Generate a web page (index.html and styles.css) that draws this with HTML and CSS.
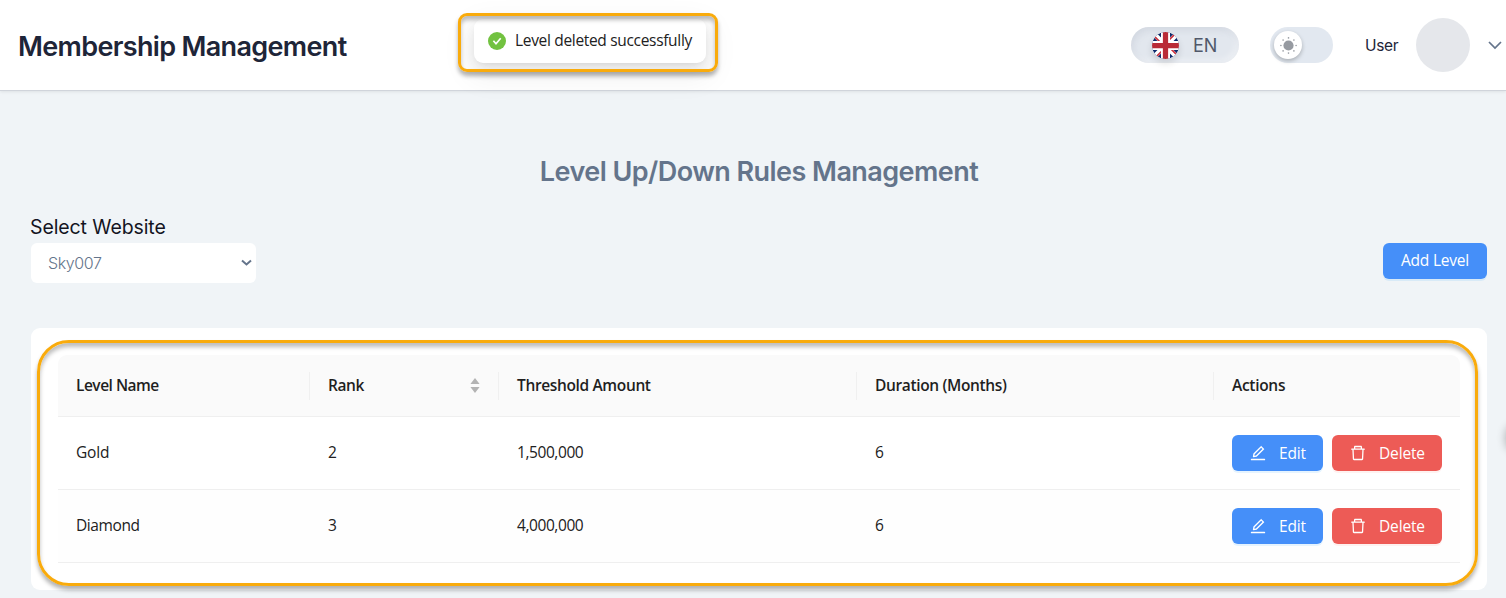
FILE: index.html
```html
<!DOCTYPE html>
<html lang="en">
<head>
<meta charset="utf-8">
<title>Membership Management</title>
<link rel="stylesheet" href="styles.css">
</head>
<body>
<svg class="defs" width="0" height="0" aria-hidden="true">
  <symbol id="edit" viewBox="64 64 896 896"><path d="M257.7 752c2 0 4-.2 6-.5L431.900 722c2-.4 3.900-1.300 5.300-2.800l423.900-423.900a9.960 9.960 0 000-14.100L694.900 114.900c-1.900-1.900-4.400-2.900-7.100-2.900s-5.200 1-7.100 2.900L256.800 538.800c-1.500 1.500-2.400 3.300-2.800 5.300l-29.500 168.200a33.500 33.500 0 009.400 29.800c6.600 6.400 14.900 9.900 23.800 9.900zm67.400-174.400L687.800 215l73.300 73.300-362.700 362.600-88.900 15.700 15.600-89zM880 836H144c-17.700 0-32 14.300-32 32v36c0 4.400 3.600 8 8 8h784c4.400 0 8-3.600 8-8v-36c0-17.700-14.300-32-32-32z"/></symbol>
  <symbol id="trash" viewBox="64 64 896 896"><path d="M360 184h-8c4.400 0 8-3.600 8-8v8h304v-8c0 4.400 3.600 8 8 8h-8v72h72v-80c0-35.300-28.700-64-64-64H352c-35.300 0-64 28.700-64 64v80h72v-72zm504 72H160c-17.700 0-32 14.300-32 32v32c0 4.400 3.600 8 8 8h60.400l24.700 523c1.600 34.100 29.800 61 63.900 61h454c34.200 0 62.300-26.800 63.900-61l24.700-523H888c4.400 0 8-3.600 8-8v-32c0-17.700-14.300-32-32-32zM731.300 840H292.700l-24.200-512h487l-24.200 512z"/></symbol>
</svg>
<header class="topbar">
  <h1 class="brand"><span class="t-brand">Membership Management</span></h1>
  <div class="tools">
    <div class="lang">
      <svg class="flag" width="27" height="27" viewBox="0 0 54 54">
        <clipPath id="disc"><circle cx="27" cy="27" r="27"/></clipPath>
        <g clip-path="url(#disc)">
          <path fill="#0e2a6b" d="M0 0h54v54H0z"/>
          <path stroke="#fff" stroke-width="10" d="M0 0l54 54M54 0L0 54"/>
          <path stroke="#c8313e" stroke-width="3.500" d="M-2 2l22 22M34 30l22 22M52-2L30 20M24 34L2 56"/>
          <path stroke="#fff" stroke-width="18" d="M27 0v54M0 27h54"/>
          <path stroke="#b92b37" stroke-width="10.500" d="M27 0v54M0 27h54"/>
        </g>
      </svg>
      <span class="t-en">EN</span>
    </div>
    <div class="switch">
      <div class="knob">
        <svg width="17" height="17" viewBox="0 0 17 17" fill="#969aa1">
          <circle cx="8.500" cy="8.500" r="5.100"/>
          <circle cx="8.500" cy=".9" r=".8"/><circle cx="8.500" cy="16.100" r=".8"/>
          <circle cx=".9" cy="8.500" r=".8"/><circle cx="16.100" cy="8.500" r=".8"/>
          <circle cx="3.100" cy="3.100" r=".8"/><circle cx="13.900" cy="3.100" r=".8"/>
          <circle cx="3.100" cy="13.900" r=".8"/><circle cx="13.900" cy="13.900" r=".8"/>
        </svg>
      </div>
    </div>
    <span class="user"><span class="t-user">User</span></span>
    <div class="avatar"></div>
    <svg class="caret" width="14" height="9" viewBox="0 0 14 9"><path d="M1 1l6 6 6-6" fill="none" stroke="#64748b" stroke-width="1.700"/></svg>
  </div>
</header>

<main class="page">
  <h2 class="heading"><span class="t-heading">Level Up/Down Rules Management</span></h2>
  <div class="filter">
    <div class="field">
      <div class="label"><span class="t-label">Select Website</span></div>
      <div class="select"><span class="t-sky">Sky007</span>
        <svg width="11" height="8" viewBox="0 0 11 8"><path d="M1 1.500l4.500 4 4.500-4" fill="none" stroke="#64748b" stroke-width="2"/></svg>
      </div>
    </div>
    <button class="btn add"><span class="t-add">Add Level</span></button>
  </div>
  <section class="card">
    <div class="table">
      <div class="row head">
        <div class="cell"><span class="t-h1">Level Name</span></div>
        <div class="cell sort"><span class="t-h2">Rank</span>
          <svg width="10" height="15" viewBox="0 0 10 15" fill="#b3b3b3"><path d="M5 0l4.600 6H.4zM5 15L.4 9h9.200z"/></svg>
        </div>
        <div class="cell"><span class="t-h3">Threshold Amount</span></div>
        <div class="cell"><span class="t-h4">Duration (Months)</span></div>
        <div class="cell"><span class="t-h5">Actions</span></div>
      </div>
      <div class="row">
        <div class="cell"><span class="t-gold">Gold</span></div>
        <div class="cell">2</div>
        <div class="cell"><span class="t-num">1,500,000</span></div>
        <div class="cell">6</div>
        <div class="cell actions">
          <button class="btn edit"><svg><use href="#edit"/></svg><span class="t-edit">Edit</span></button>
          <button class="btn delete"><svg><use href="#trash"/></svg><span class="t-del">Delete</span></button>
        </div>
      </div>
      <div class="row alt">
        <div class="cell"><span class="t-dia">Diamond</span></div>
        <div class="cell">3</div>
        <div class="cell"><span class="t-num">4,000,000</span></div>
        <div class="cell">6</div>
        <div class="cell actions">
          <button class="btn edit"><svg><use href="#edit"/></svg><span class="t-edit">Edit</span></button>
          <button class="btn delete"><svg><use href="#trash"/></svg><span class="t-del">Delete</span></button>
        </div>
      </div>
    </div>
  </section>
</main>

<div class="toast">
  <svg width="18" height="18" viewBox="0 0 18 18"><circle cx="9" cy="9" r="9" fill="#72c240"/><path d="M5.400 8.800l2.600 2.900 4.700-5.400" fill="none" stroke="#fff" stroke-width="1.700"/></svg>
  <span class="t-toast">Level deleted successfully</span>
</div>
<div class="mark mark-toast"></div>
<div class="mark mark-table"></div>
<div class="edge"></div>
</body>
</html>
```
FILE: styles.css
```css
* { box-sizing: border-box; }
body {
  margin: 0;
  position: relative;
  height: 598px;
  overflow: hidden;
  background: #f0f4f7;
  color: #212121;
  font: 15.500px/24px "Open Sans", "Noto Sans", sans-serif;
}
.defs { position: absolute; }
h1, h2 { margin: 0; }
.topbar {
  height: 91px;
  display: flex;
  justify-content: space-between;
  align-items: center;
  padding: 0 5px 0 18px;
  background: #fff;
  border-bottom: 1px solid #d0d4db;
  box-shadow: 0 1px 3px rgba(0, 0, 0, .08);
}
.brand { padding-top: 3px; font: 600 27px/36px Inter, sans-serif; color: #1e2538; }
.tools { display: flex; align-items: center; }
.lang {
  width: 108px;
  height: 36px;
  padding-left: 21px;
  display: flex;
  align-items: center;
  gap: 14px;
  border-radius: 18px;
  background: #e2e7ee;
  box-shadow: inset 2px 3px 7px rgba(100, 110, 130, .12), inset -3px -3px 6px rgba(255, 255, 255, .4);
  font: 18px/24px Inter, sans-serif;
  color: #505869;
}
.flag { border-radius: 50%; box-shadow: 0 4px 7px rgba(0, 0, 0, .12); }
.switch {
  width: 63px;
  height: 36px;
  margin-left: 31px;
  padding: 4px;
  border-radius: 18px;
  background: #e2e8f0;
}
.knob {
  width: 28px;
  height: 28px;
  display: flex;
  align-items: center;
  justify-content: center;
  border-radius: 50%;
  background: #fff;
  box-shadow: 0 2px 4px rgba(0, 0, 0, .25);
}
.user { width: 51px; margin-left: 32px; padding-top: 2px; font: 400 15.500px/24px Inter, sans-serif; color: #1e2538; }
.avatar { width: 54px; height: 54px; border-radius: 50%; background: #e5e7eb; }
.caret { margin-left: 18px; margin-right: -1px; }
.page { padding: 61px 19px 0 31px; }
.heading {
  text-align: center;
  font: 600 27px/40px Inter, sans-serif;
  color: #64748b;
}
.filter {
  height: 136px;
  padding-top: 21px;
  display: flex;
  justify-content: space-between;
}
.field { width: 225px; }
.label { height: 30px; padding-top: 1px; margin-left: -1px; font: 400 19.500px/26px Inter, sans-serif; color: #14141f; white-space: nowrap; }
.select {
  height: 40px;
  padding: 0 4px 0 17px;
  display: flex;
  align-items: center;
  justify-content: space-between;
  background: #fff;
  border-radius: 6px;
  font: 300 16px/24px Inter, sans-serif;
  color: #64748b;
}
.btn {
  height: 36px;
  padding: 0;
  display: flex;
  align-items: center;
  border: 0;
  border-radius: 6px;
  background: #458ff9;
  color: #fff;
  font: inherit;
  box-shadow: 0 2px 0 rgba(5, 145, 255, .1);
}
.add { width: 104px; margin-top: 30px; padding-bottom: 2px; justify-content: center; }
.card { height: 262px; padding: 27px; background: #fff; border-radius: 9px; }
.row {
  height: 73px;
  display: grid;
  grid-template-columns: 252px 189px 358px 357px 1fr;
  align-items: center;
  border-bottom: 1px solid #efefef;
}
.cell { padding-left: 18px; padding-bottom: 2px; white-space: nowrap; }
.head { height: 62px; background: #fafafa; border-radius: 9px 9px 0 0; font-weight: 600; color: #1f1f1f; }
.head .cell { height: 28px; line-height: 26px; border-right: 1px solid #f0f0f0; }
.head .cell:last-child { border-right: 0; }
.alt { background: #fefefe; }
.sort { display: flex; align-items: center; justify-content: space-between; padding-right: 18px; }
.sort svg { margin-top: 1px; }
.actions { display: flex; gap: 9px; padding-bottom: 0; }
.btn svg { width: 16px; height: 16px; fill: currentColor; margin: 0 13px 0 18px; }
.edit { width: 91px; }
.delete { width: 110px; background: #ed5b56; box-shadow: 0 2px 0 rgba(255, 38, 5, .06); }
.toast {
  position: absolute;
  left: 474px;
  top: 19px;
  width: 232px;
  height: 44px;
  padding-left: 14px;
  display: flex;
  align-items: center;
  gap: 9px;
  background: #fff;
  border-radius: 9px;
  white-space: nowrap;
  box-shadow: 0 6px 16px rgba(0, 0, 0, .08), 0 3px 6px -4px rgba(0, 0, 0, .12), 0 9px 28px 8px rgba(0, 0, 0, .05);
}
.mark {
  position: absolute;
  border: 3px solid #f9ab0c;
  box-shadow: 0 4px 4px rgba(0, 0, 0, .3), inset 0 4px 4px rgba(0, 0, 0, .26);
}
.mark-toast { left: 458px; top: 13px; width: 260px; height: 59px; border-radius: 9px; }
.mark-table { left: 37px; top: 340px; width: 1441px; height: 246px; border-radius: 32px; }
.edge {
  position: absolute;
  left: 1506px;
  top: 425px;
  width: 20px;
  height: 26px;
  border-radius: 10px;
  box-shadow: 0 0 10px rgba(0, 0, 0, .3);
}

/* Tracking per label */
[class^="t-"] { display: inline-block; }
.t-brand { letter-spacing: -.66px; }
.t-heading { letter-spacing: -.55px; }
.t-en { padding-top: 2px; }
.t-user { letter-spacing: -.35px; }
.t-label { letter-spacing: -.1px; }
.t-sky { letter-spacing: -.4px; }
.t-toast { letter-spacing: -.32px; padding-bottom: 2px; }
.t-h1 { letter-spacing: -.5px; }
.t-h2 { letter-spacing: -.4px; }
.t-h3, .t-h4 { letter-spacing: -.36px; }
.t-h5 { letter-spacing: -.3px; }
.t-num { letter-spacing: -.42px; }
.t-dia { letter-spacing: -.4px; }
.t-gold, .t-add { letter-spacing: -.2px; }
.t-edit, .t-del { letter-spacing: -.15px; }
```
